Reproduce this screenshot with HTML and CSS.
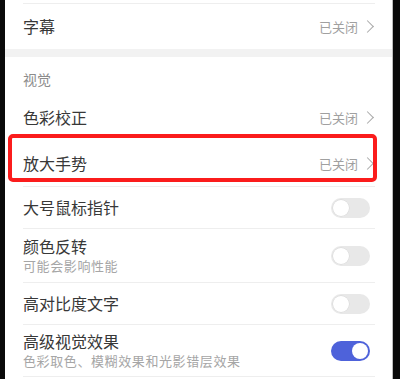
FILE: index.html
```html
<!DOCTYPE html>
<html>
<head>
    <meta charset="utf-8">
    <title>无障碍 - 视觉</title>
    <link rel="stylesheet" href="styles.css">
</head>
<body>
    <div class="screen">
        <div class="edge-left"></div>
        <div class="panel">
            <div class="top-gap"></div>

            <div class="row">
                <div class="row-inner line h46">
                    <span class="title">字幕</span>
                    <span class="value">已关闭<span class="chevron"></span></span>
                </div>
            </div>

            <div class="band"></div>

            <div class="section-head">视觉</div>

            <div class="row">
                <div class="row-inner h46">
                    <span class="title">色彩校正</span>
                    <span class="value">已关闭<span class="chevron"></span></span>
                </div>
            </div>

            <div class="row marked">
                <div class="row-inner h46">
                    <span class="title">放大手势</span>
                    <span class="value">已关闭<span class="chevron"></span></span>
                </div>
                <div class="mark-box"></div>
            </div>

            <div class="row">
                <div class="row-inner line h42">
                    <span class="title">大号鼠标指针</span>
                    <span class="switch"><span class="knob"></span></span>
                </div>
            </div>

            <div class="row">
                <div class="row-inner line h54">
                    <div class="text">
                        <div class="title">颜色反转</div>
                        <div class="sub">可能会影响性能</div>
                    </div>
                    <span class="switch"><span class="knob"></span></span>
                </div>
            </div>

            <div class="row">
                <div class="row-inner line h42">
                    <span class="title">高对比度文字</span>
                    <span class="switch"><span class="knob"></span></span>
                </div>
            </div>

            <div class="row">
                <div class="row-inner line bottom h53">
                    <div class="text">
                        <div class="title">高级视觉效果</div>
                        <div class="sub">色彩取色、模糊效果和光影错层效果</div>
                    </div>
                    <span class="switch on"><span class="knob"></span></span>
                </div>
            </div>
        </div>
        <div class="edge-right"></div>
    </div>
</body>
</html>
```

FILE: styles.css
```css
html, body {
    margin: 0;
    padding: 0;
    background-color: #000;
}
body {
    font-family: "Noto Sans CJK SC", "Noto Sans", sans-serif;
    color: #333;
}
.screen {
    display: flex;
    width: 400px;
    height: 379px;
    overflow: hidden;
}
.edge-left {
    width: 5px;
    background-color: #0a0a0a;
}
.edge-right {
    width: 7px;
    background-color: #0a0a0a;
    border-left: 1px solid #bdbdbd;
}
.panel {
    flex: 1;
    background-color: #fff;
}
.top-gap {
    height: 3px;
}
.row {
    padding: 0 17px 0 18px;
    position: relative;
}
.row-inner {
    display: flex;
    align-items: center;
    justify-content: space-between;
    box-sizing: border-box;
}
.line {
    border-top: 1px solid #eeeeee;
}
.bottom {
    border-bottom: 1px solid #eeeeee;
}
.h42 { height: 42px; }
.h46 { height: 46px; }
.h53 { height: 53px; }
.h54 { height: 54px; }

.text {
    display: flex;
    flex-direction: column;
    gap: 1px;
}
.title {
    font-size: 16px;
    line-height: 19px;
    color: #383838;
}
.sub {
    font-size: 13px;
    line-height: 17px;
    color: #a6a6a6;
    letter-spacing: 0.6px;
}
.value {
    display: flex;
    align-items: center;
    font-size: 13px;
    color: #a0a0a0;
}
.chevron {
    display: inline-block;
    width: 8px;
    height: 8px;
    margin-left: 5px;
    margin-right: 3px;
    border-top: 1px solid #a8a8a8;
    border-right: 1px solid #a8a8a8;
    transform: rotate(45deg);
}
.band {
    height: 8px;
    background-color: #f2f2f2;
}
.section-head {
    height: 37px;
    box-sizing: border-box;
    padding: 12px 0 0 18px;
    font-size: 14px;
    line-height: 20px;
    color: #8c8c8c;
}

.switch {
    display: flex;
    align-items: center;
    width: 39px;
    height: 20px;
    margin-right: 5px;
    box-sizing: border-box;
    padding: 0 2px;
    border-radius: 10px;
    background-color: #e8e8e8;
}
.knob {
    width: 16px;
    height: 16px;
    border-radius: 50%;
    background-color: #fff;
    box-shadow: 0 0 0 0.5px #d6d6d6;
}
.switch.on {
    background-color: #4e62da;
    justify-content: flex-end;
}
.switch.on .knob {
    box-shadow: none;
}

/* red annotation frame over the gesture row */
.mark-box {
    position: absolute;
    top: -6px;
    left: 3px;
    right: 15px;
    bottom: 4px;
    border: 4px solid #fb1c1c;
    border-radius: 5px;
}
```
